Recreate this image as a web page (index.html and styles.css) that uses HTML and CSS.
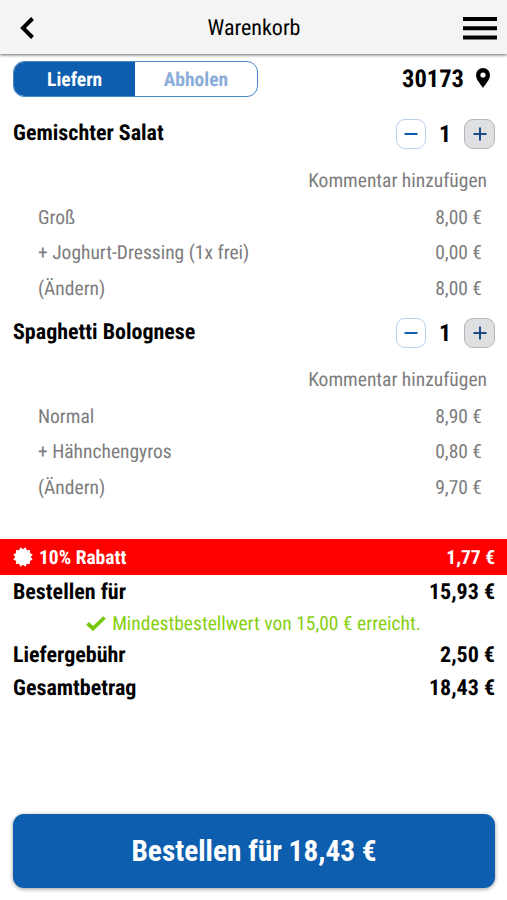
FILE: index.html
```html
<!DOCTYPE html>
<html lang="de">

<head>
    <meta charset="UTF-8">
    <meta name="viewport" content="width=device-width, initial-scale=1.0">
    <title>Warenkorb</title>
    <link rel="stylesheet" href="styles.css">
</head>

<body>
    <header class="header">
        <svg class="back-icon" width="14" height="22" viewBox="0 0 14 22">
            <path d="M12.500 1.500L3 11l9.500 9.500" fill="none" stroke="#000" stroke-width="4" />
        </svg>
        <h1 class="header-title">Warenkorb</h1>
        <svg class="menu-icon" width="34" height="23" viewBox="0 0 34 23">
            <path d="M0 2h34M0 11.2h34M0 20.4h34" stroke="#000" stroke-width="4" />
        </svg>
    </header>

    <main class="cart">
        <div class="delivery">
            <div class="switch">
                <div class="switch-option active">Liefern</div>
                <div class="switch-option">Abholen</div>
            </div>
            <div class="location">
                <span>30173</span>
                <svg width="14" height="20" viewBox="0 0 14 20">
                    <path fill-rule="evenodd" d="M7 0a7 7 0 0 0-7 7c0 4.600 4 8.500 7 13 3-4.500 7-8.400 7-13a7 7 0 0 0-7-7zm0 4.400a2.600 2.600 0 1 1 0 5.200 2.600 2.600 0 0 1 0-5.200z" />
                </svg>
            </div>
        </div>

        <section class="item">
            <div class="item-head">
                <h2 class="item-name">Gemischter Salat</h2>
                <div class="quantity">
                    <button class="qty-btn"><svg width="14" height="14" viewBox="0 0 14 14"><path d="M0.500 7h13" stroke="#0d5eae" stroke-width="2" /></svg></button>
                    <span class="qty-value">1</span>
                    <button class="qty-btn plus"><svg width="14" height="14" viewBox="0 0 14 14"><path d="M0.500 7h13M7 0.500v13" stroke="#174a86" stroke-width="2" /></svg></button>
                </div>
            </div>
            <div class="comment">Kommentar hinzufügen</div>
            <div class="line"><span>Groß</span><span>8,00 €</span></div>
            <div class="line"><span>+ Joghurt-Dressing (1x frei)</span><span>0,00 €</span></div>
            <div class="line"><span>(Ändern)</span><span>8,00 €</span></div>
        </section>

        <section class="item">
            <div class="item-head">
                <h2 class="item-name">Spaghetti Bolognese</h2>
                <div class="quantity">
                    <button class="qty-btn"><svg width="14" height="14" viewBox="0 0 14 14"><path d="M0.500 7h13" stroke="#0d5eae" stroke-width="2" /></svg></button>
                    <span class="qty-value">1</span>
                    <button class="qty-btn plus"><svg width="14" height="14" viewBox="0 0 14 14"><path d="M0.500 7h13M7 0.500v13" stroke="#174a86" stroke-width="2" /></svg></button>
                </div>
            </div>
            <div class="comment">Kommentar hinzufügen</div>
            <div class="line"><span>Normal</span><span>8,90 €</span></div>
            <div class="line"><span>+ Hähnchengyros</span><span>0,80 €</span></div>
            <div class="line"><span>(Ändern)</span><span>9,70 €</span></div>
        </section>
    </main>

    <div class="discount">
        <svg width="20" height="20" viewBox="-10 -10 20 20">
            <path fill="#fff" d="M0-7.800L2.500-9.700l1.400 2.900L7.100-7.100l-.3 3.200L9.700-2.500 7.800 0l1.900 2.500-2.900 1.400.3 3.200-3.200-.3-1.400 2.900L0 7.800l-2.500 1.900-1.400-2.900-3.200.3.3-3.200-2.900-1.400L-7.800 0l-1.900-2.500 2.900-1.400-.3-3.200 3.200.3 1.400-2.900z" />
        </svg>
        <span class="discount-name">10% Rabatt</span>
        <span>1,77 €</span>
    </div>

    <div class="summary">
        <div class="sum-row"><span>Bestellen für</span><span>15,93 €</span></div>
        <div class="min-order">
            <svg width="20" height="15" viewBox="0 0 20 15">
                <path d="M1.500 7.500l5.500 5L18.500 1.500" fill="none" stroke="#78c80a" stroke-width="3.800" />
            </svg>
            <span>Mindestbestellwert von 15,00 € erreicht.</span>
        </div>
        <div class="sum-row"><span>Liefergebühr</span><span>2,50 €</span></div>
        <div class="sum-row"><span>Gesamtbetrag</span><span>18,43 €</span></div>
    </div>

    <button class="order-btn">Bestellen für 18,43 €</button>
</body>

</html>
```
FILE: styles.css
```css
* {
    box-sizing: border-box;
}

body {
    margin: 0;
    height: 900px;
    display: flex;
    flex-direction: column;
    background-color: #fff;
    color: #000;
    font-family: "Roboto Condensed", Roboto, sans-serif;
    font-stretch: 75%;
    font-size: 19.5px;
    text-rendering: geometricPrecision;
    white-space: nowrap;
    overflow: hidden;
}

button {
    font-family: inherit;
    font-stretch: inherit;
    padding: 0;
    cursor: pointer;
}

.header {
    height: 54px;
    flex-shrink: 0;
    display: flex;
    align-items: center;
    justify-content: space-between;
    padding: 2px 10px 0 20px;
    background-color: #f4f4f4;
    box-shadow: 0 1px 3px rgba(0, 0, 0, 0.6);
}

.back-icon {
    margin-right: 11px;
}

.header-title {
    margin: 0;
    padding-top: 1px;
    font-size: 22px;
    font-weight: 400;
}

.cart {
    height: 485px;
    flex-shrink: 0;
    padding: 7px 12px 0 13px;
}

.delivery {
    height: 36px;
    display: flex;
    justify-content: space-between;
    align-items: center;
    margin-bottom: 9.5px;
}

.switch {
    width: 244.5px;
    height: 36px;
    display: flex;
    border: 1px solid #4a86c6;
    border-radius: 11px;
    overflow: hidden;
}

.switch-option {
    flex: 1;
    display: flex;
    align-items: center;
    justify-content: center;
    font-weight: 700;
    color: #8badda;
}

.switch-option.active {
    background-color: #0d5eae;
    color: #fff;
}

.location {
    display: flex;
    align-items: center;
    gap: 12px;
    padding: 0 5px 2px 0;
    font-size: 24.5px;
    font-weight: 700;
}

.item {
    height: 199px;
    padding-top: 12.5px;
}

.item-head {
    height: 30px;
    display: flex;
    justify-content: space-between;
    margin-bottom: 14px;
}

.item-name {
    margin: 0;
    font-size: 22px;
    font-weight: 700;
    line-height: 30px;
}

.quantity {
    display: flex;
    align-items: center;
}

.qty-value {
    width: 38px;
    text-align: center;
    font-size: 24px;
    font-weight: 700;
}

.qty-btn {
    width: 30px;
    height: 30px;
    display: flex;
    align-items: center;
    justify-content: center;
    background-color: #fff;
    border: 1px solid #b9cfee;
    border-radius: 9px;
}

.qty-btn.plus {
    width: 31px;
    background-color: #dfe0e2;
    border-color: #b4b6ba;
}

.comment {
    height: 36.5px;
    line-height: 36.5px;
    padding-right: 8px;
    text-align: right;
    color: #7c7c7c;
}

.line {
    height: 35.5px;
    line-height: 36px;
    display: flex;
    justify-content: space-between;
    padding: 0 13px 0 25px;
    color: #7c7c7c;
}

.discount {
    height: 36px;
    flex-shrink: 0;
    display: flex;
    align-items: center;
    padding: 0 12px 0 13px;
    background-color: #f00;
    color: #fff;
    font-weight: 700;
}

.discount-name {
    flex: 1;
    margin-left: 6px;
}

.summary {
    padding: 1px 12px 0 13px;
    font-size: 22px;
}

.sum-row {
    height: 33px;
    display: flex;
    align-items: center;
    justify-content: space-between;
    font-weight: 700;
}

.min-order {
    height: 30px;
    display: flex;
    align-items: center;
    justify-content: center;
    gap: 6px;
    padding: 0 1px 2px 0;
    font-size: 19.5px;
    color: #86cf10;
}

.order-btn {
    height: 74px;
    flex-shrink: 0;
    margin: auto 12px 12px 13px;
    padding-bottom: 1px;
    border: none;
    border-radius: 11px;
    background-color: #0d5eae;
    box-shadow: 0 1px 4px rgba(0, 0, 0, 0.4);
    color: #fff;
    font-size: 29.3px;
    font-weight: 700;
}
```
